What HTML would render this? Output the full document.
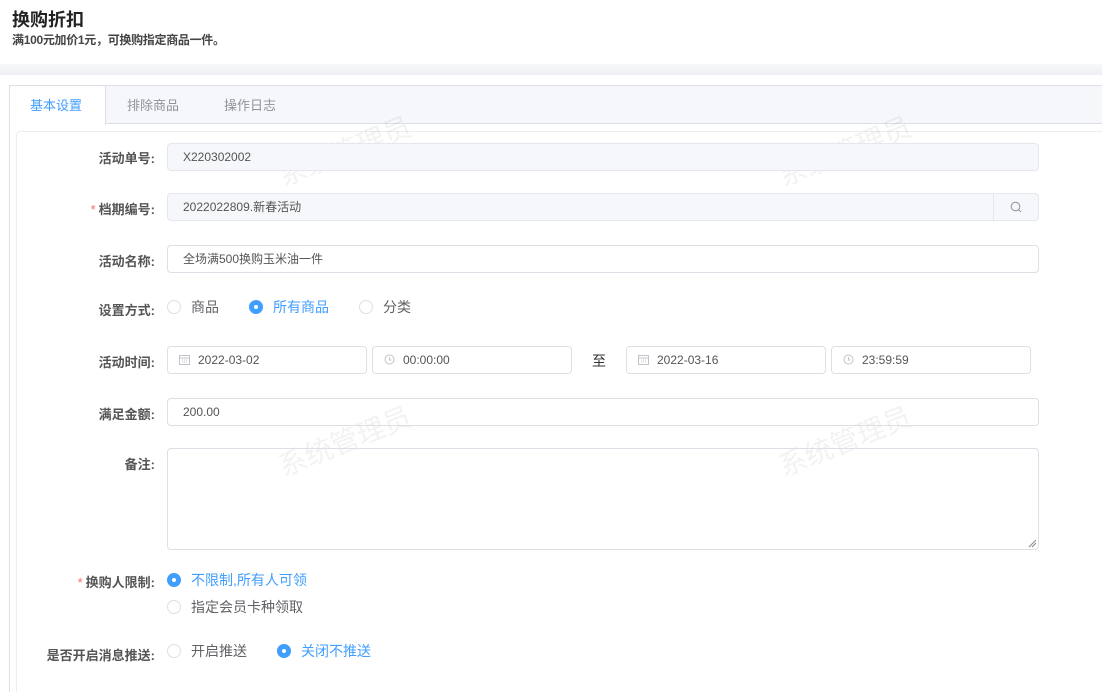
<!DOCTYPE html><html><head><meta charset="utf-8"><style>
*{box-sizing:border-box;margin:0;padding:0}
html,body{width:1102px;height:692px;overflow:hidden}
body{background:#fff;font-family:"Liberation Sans","Noto Sans CJK SC",sans-serif;font-size:13px;color:#606266;position:relative}
.abs{position:absolute}
.h1{left:12px;top:6px;font-size:18px;font-weight:bold;color:#222}
.sub{left:12px;top:31px;font-size:12px;font-weight:bold;color:#444;letter-spacing:-0.3px}
.band{left:0;top:64px;width:1102px;height:11px;background:linear-gradient(#f7f8fa,#eeeff2)}
.tabs{left:9px;top:85px;width:1093px;height:607px;border:1px solid #dcdfe6;border-bottom:none;border-right:none}
.tabh{left:10px;top:86px;width:1092px;height:38px;background:#f5f7fa;border-bottom:1px solid #dcdfe6}
.tab{top:86px;height:39px;line-height:39px;font-size:13px;color:#909399}
.card{left:16px;top:131px;width:1086px;height:561px;border:1px solid #ebeef5;border-bottom:none;border-right:none;border-radius:4px 0 0 0}
.lbl{width:160px;left:0;text-align:right;font-weight:bold;color:#555;font-size:13px;padding-right:5px}
.lbl i{color:#f56c6c;font-style:normal;font-weight:normal;margin-right:3px}
.inp{height:28px;border:1px solid #dcdfe6;border-radius:4px;line-height:26px;padding-left:15px;font-size:12px;color:#555}
.dis{background:#f5f7fa;border-color:#e4e7ed}
.r{width:14px;height:14px;border:1px solid #dcdfe6;border-radius:50%;background:#fff}
.r.on{background:#409eff;border-color:#409eff}
.r.on:after{content:"";position:absolute;left:4px;top:4px;width:4px;height:4px;border-radius:50%;background:#fff}
.rt{font-size:14px;color:#606266}
.rt.on{color:#409eff}
.wm{font-size:28px;color:rgba(0,0,0,0.05);transform:rotate(-22deg);transform-origin:left top;white-space:nowrap}
svg{position:absolute}
</style></head><body>
<div class="abs h1">换购折扣</div>
<div class="abs sub">满100元加价1元，可换购指定商品一件。</div>
<div class="abs band"></div>
<div class="abs tabs"></div>
<div class="abs tabh"></div>
<div class="abs" style="left:10px;top:86px;width:96px;height:39px;background:#fff;border-right:1px solid #dcdfe6"></div>
<div class="abs tab" style="left:30px;color:#409eff">基本设置</div>
<div class="abs tab" style="left:127px">排除商品</div>
<div class="abs tab" style="left:224px">操作日志</div>
<div class="abs card"></div>

<div class="abs wm" style="left:272px;top:158px">系统管理员</div>
<div class="abs wm" style="left:772px;top:158px">系统管理员</div>
<div class="abs wm" style="left:272px;top:448px">系统管理员</div>
<div class="abs wm" style="left:772px;top:448px">系统管理员</div>

<div class="abs lbl" style="top:148px">活动单号:</div>
<div class="abs inp dis" style="left:167px;top:143px;width:872px">X220302002</div>

<div class="abs lbl" style="top:199px"><i>*</i>档期编号:</div>
<div class="abs inp dis" style="left:167px;top:193px;width:872px">2022022809.新春活动</div>
<div class="abs" style="left:993px;top:194px;width:1px;height:26px;background:#e4e7ed"></div>
<svg style="left:1009px;top:200px" width="14" height="14" viewBox="0 0 14 14"><circle cx="6.5" cy="6.5" r="4.3" fill="none" stroke="#909399" stroke-width="1"/><path d="M9.5 9.5L12 12" stroke="#909399" stroke-width="1"/></svg>

<div class="abs lbl" style="top:251px">活动名称:</div>
<div class="abs inp" style="left:167px;top:245px;width:872px">全场满500换购玉米油一件</div>

<div class="abs lbl" style="top:300px">设置方式:</div>
<div class="abs r" style="left:167px;top:300px"></div><div class="abs rt" style="left:191px;top:297px">商品</div>
<div class="abs r on" style="left:249px;top:300px"></div><div class="abs rt on" style="left:273px;top:297px">所有商品</div>
<div class="abs r" style="left:359px;top:300px"></div><div class="abs rt" style="left:383px;top:297px">分类</div>

<div class="abs lbl" style="top:352px">活动时间:</div>
<div class="abs inp" style="left:167px;top:346px;width:200px;padding-left:30px">2022-03-02</div>
<div class="abs inp" style="left:372px;top:346px;width:200px;padding-left:30px">00:00:00</div>
<div class="abs" style="left:592px;top:351px;font-size:14px;color:#333">至</div>
<div class="abs inp" style="left:626px;top:346px;width:200px;padding-left:30px">2022-03-16</div>
<div class="abs inp" style="left:831px;top:346px;width:200px;padding-left:30px">23:59:59</div>
<svg style="left:179px;top:354px" width="11" height="11" viewBox="0 0 11 11"><rect x="0.5" y="1.5" width="10" height="9" fill="none" stroke="#c0c4cc"/><path d="M0.5 4h10M3 6h1M5 6h1M7 6h1M3 8h1M5 8h1M7 8h1" stroke="#c0c4cc"/></svg>
<svg style="left:638px;top:354px" width="11" height="11" viewBox="0 0 11 11"><rect x="0.5" y="1.5" width="10" height="9" fill="none" stroke="#c0c4cc"/><path d="M0.5 4h10M3 6h1M5 6h1M7 6h1M3 8h1M5 8h1M7 8h1" stroke="#c0c4cc"/></svg>
<svg style="left:384px;top:354px" width="11" height="11" viewBox="0 0 11 11"><circle cx="5.5" cy="5.5" r="4.5" fill="none" stroke="#c0c4cc"/><path d="M5.5 3v3h2" fill="none" stroke="#c0c4cc"/></svg>
<svg style="left:843px;top:354px" width="11" height="11" viewBox="0 0 11 11"><circle cx="5.5" cy="5.5" r="4.5" fill="none" stroke="#c0c4cc"/><path d="M5.5 3v3h2" fill="none" stroke="#c0c4cc"/></svg>

<div class="abs lbl" style="top:404px">满足金额:</div>
<div class="abs inp" style="left:167px;top:398px;width:872px">200.00</div>

<div class="abs lbl" style="top:454px">备注:</div>
<div class="abs inp" style="left:167px;top:448px;width:872px;height:102px"></div>
<svg style="left:1028px;top:539px" width="9" height="9"><path d="M1 8L8 1M4 8L8 4" stroke="#888"/></svg>

<div class="abs lbl" style="top:572px"><i>*</i>换购人限制:</div>
<div class="abs r on" style="left:167px;top:573px"></div><div class="abs rt on" style="left:191px;top:570px">不限制,所有人可领</div>
<div class="abs r" style="left:167px;top:600px"></div><div class="abs rt" style="left:191px;top:597px">指定会员卡种领取</div>

<div class="abs lbl" style="top:645px">是否开启消息推送:</div>
<div class="abs r" style="left:167px;top:644px"></div><div class="abs rt" style="left:191px;top:641px">开启推送</div>
<div class="abs r on" style="left:277px;top:644px"></div><div class="abs rt on" style="left:301px;top:641px">关闭不推送</div>
</body></html>
